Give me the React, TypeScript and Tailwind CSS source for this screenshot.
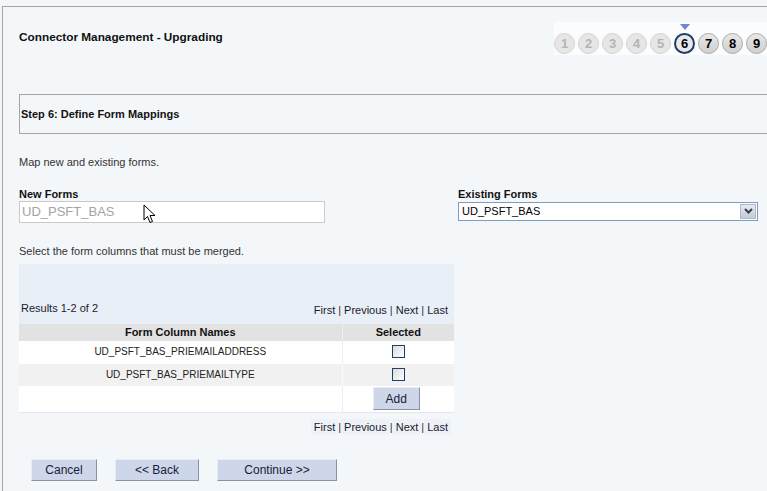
import React from 'react';

const font = { fontFamily: '"Liberation Sans", Arial, sans-serif' };

const steps = [1, 2, 3, 4, 5, 6, 7, 8, 9];

function StepCircle({ n }: { n: number }) {
  if (n < 6) {
    return (
      <div className="w-[21px] h-[21px] rounded-full bg-[#e6e6e6] border border-[#d2d2d2] flex items-center justify-center text-[13px] font-bold text-[#b4b4b4]">
        {n}
      </div>
    );
  }
  if (n === 6) {
    return (
      <div className="relative w-[21px] h-[21px] rounded-full bg-[#e9e9e9] border-2 border-[#1d3c6a] flex items-center justify-center text-[13px] font-bold text-black">
        <span className="absolute -top-[11px] left-1/2 -translate-x-1/2 w-0 h-0 border-l-[5px] border-r-[5px] border-t-[6px] border-l-transparent border-r-transparent border-t-[#7384d6]" />
        {n}
      </div>
    );
  }
  return (
    <div className="w-[21px] h-[21px] rounded-full bg-gradient-to-b from-[#e8e8e8] to-[#cfcfcf] border border-[#a9a9a9] flex items-center justify-center text-[13px] font-bold text-black">
      {n}
    </div>
  );
}

function Pager({ boxed }: { boxed?: boolean }) {
  const seg = boxed ? 'bg-[#eef2f7] px-[3px]' : 'px-[3px]';
  return (
    <div className="flex items-center text-[11px] text-[#1a1a2e]">
      <span className={seg}>First</span>
      <span className="text-[#333]">|</span>
      <span className={seg}>Previous</span>
      <span className="text-[#333]">|</span>
      <span className={seg}>Next</span>
      <span className="text-[#333]">|</span>
      <span className={seg}>Last</span>
    </div>
  );
}

function Btn({ label, w }: { label: string; w: string }) {
  return (
    <button
      className={`${w} h-[22px] bg-[#cdd7e9] border border-[#e8edf6] border-r-[#8a93a3] border-b-[#8a93a3] text-[12px] text-[#1a1a3a]`}
    >
      {label}
    </button>
  );
}

export default function App() {
  return (
    <div className="w-[767px] h-[491px] bg-[#f4f7fa] overflow-hidden text-[#222]" style={font}>
      <div className="ml-[2px] mt-[6px] h-[485px] border-l border-t border-[#a5a5a5]">
        {/* header */}
        <div className="flex justify-between">
          <div className="pl-[16px] pt-[22px] text-[11.8px] font-bold text-[#111]">Connector Management - Upgrading</div>
          <div className="mt-[15px] pt-[11px] pb-[1px] bg-[#fbfcfd] flex gap-[3px]">
            {steps.map((n) => (
              <StepCircle key={n} n={n} />
            ))}
          </div>
        </div>

        {/* step box */}
        <div className="ml-[16px] mt-[39px] h-[40px] border border-r-0 border-[#a5a5a5] flex items-center pl-[1px]">
          <span className="text-[11px] font-bold text-[#111]">Step 6: Define Form Mappings</span>
        </div>

        <div className="pl-[16px]">
          <div className="mt-[20px] text-[11px] text-[#333]">Map new and existing forms.</div>

          <div className="mt-[17px] flex">
            <div className="w-[439px]">
              <div className="text-[11px] font-bold text-[#111] leading-[13px]">New Forms</div>
              <div className="w-[306px] h-[22px] bg-white border border-[#c9c9c9] flex items-center pl-[2px] text-[13px] text-[#a3a3a3] relative">
                UD_PSFT_BAS
                <svg className="absolute left-[123px] top-[2px]" width="13" height="21" viewBox="0 0 13 21">
                  <path d="M1 1 L1 16 L4.5 12.5 L7 18.5 L9.5 17.5 L7 11.5 L12 11.5 Z" fill="white" stroke="black" strokeWidth="1" />
                </svg>
              </div>
            </div>
            <div>
              <div className="text-[11px] font-bold text-[#111] leading-[13px]">Existing Forms</div>
              <div className="mt-[1px] w-[300px] h-[19px] bg-white border border-[#7f9db9] flex items-center justify-between text-[11px] text-black">
                <span className="pl-[3px]">UD_PSFT_BAS</span>
                <span className="w-[16px] h-[15px] mr-[1px] bg-gradient-to-b from-[#e7ebf2] to-[#c3cad6] border border-[#b0b8c6] flex items-center justify-center">
                  <svg width="9" height="6" viewBox="0 0 9 6">
                    <path d="M1 1 L4.5 4.5 L8 1" fill="none" stroke="#3a3f4a" strokeWidth="2" />
                  </svg>
                </span>
              </div>
            </div>
          </div>

          <div className="mt-[20px] text-[11px] text-[#333]">Select the form columns that must be merged.</div>

          {/* table */}
          <div className="mt-[5px] w-[435px]">
            <div className="h-[60px] bg-[#e9eff7] flex items-end justify-between pl-[2px] pr-[3px] pb-[6px]">
              <span className="text-[11px] text-[#1a1a2e] mb-[2px]">Results 1-2 of 2</span>
              <Pager />
            </div>
            <table className="w-full border-collapse text-[11px]">
              <thead>
                <tr className="h-[17px] bg-[#e2e2e2]">
                  <th className="w-[323px] font-bold text-[#111] border-r border-[#f0f0f0]">Form Column Names</th>
                  <th className="font-bold text-[#111]">Selected</th>
                </tr>
              </thead>
              <tbody>
                <tr className="h-[22px] bg-white">
                  <td className="text-center text-[10px] text-[#222] border-r border-[#e8edf3]">UD_PSFT_BAS_PRIEMAILADDRESS</td>
                  <td>
                    <div className="mx-auto w-[13px] h-[13px] border border-[#1c3f6e] bg-gradient-to-br from-[#dcdcdc] to-white" />
                  </td>
                </tr>
                <tr className="h-[23px] bg-[#f1f1f1] border-t border-white">
                  <td className="text-center text-[10px] text-[#222] border-r border-[#fafafa]">UD_PSFT_BAS_PRIEMAILTYPE</td>
                  <td>
                    <div className="mx-auto w-[13px] h-[13px] border border-[#1c3f6e] bg-gradient-to-br from-[#dcdcdc] to-white" />
                  </td>
                </tr>
                <tr className="h-[26px] bg-white border-b border-[#e4e9f0]">
                  <td className="border-r border-[#e8edf3]" />
                  <td className="text-center">
                    <button className="w-[47px] h-[23px] mr-[4px] bg-[#cdd7e9] border border-[#e8edf6] border-r-[#8a93a3] border-b-[#8a93a3] text-[12px] text-[#1a1a3a]">
                      Add
                    </button>
                  </td>
                </tr>
              </tbody>
            </table>
            <div className="mt-[6px] flex justify-end pr-[3px]">
              <Pager boxed />
            </div>
          </div>

          <div className="mt-[24px] ml-[12px] flex gap-[18px]">
            <Btn label="Cancel" w="w-[66px]" />
            <Btn label="<< Back" w="w-[84px]" />
            <Btn label="Continue >>" w="w-[120px]" />
          </div>
        </div>
      </div>
    </div>
  );
}
